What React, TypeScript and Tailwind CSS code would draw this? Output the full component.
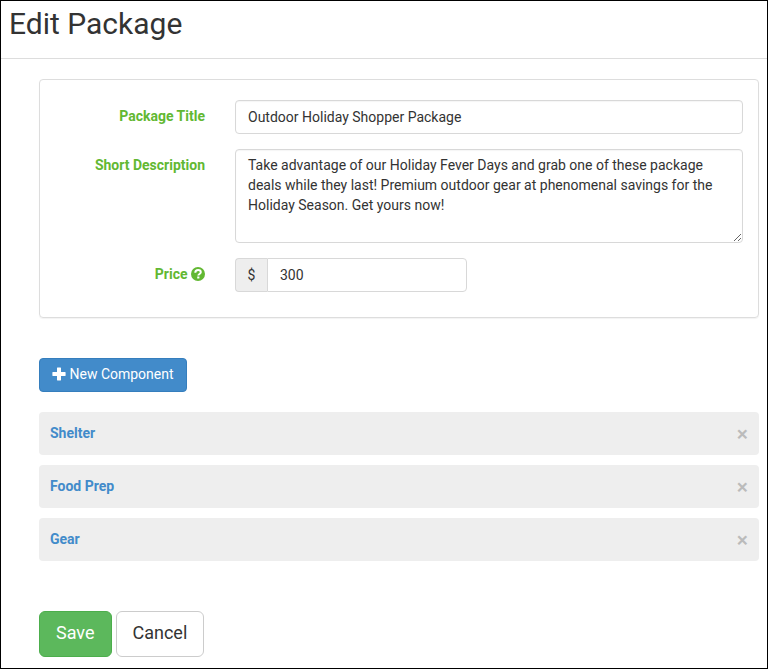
import React, { useState } from "react";

const initialComponents = [
  { id: 1, name: "Shelter" },
  { id: 2, name: "Food Prep" },
  { id: 3, name: "Gear" },
];

const inputClass =
  "block w-full h-[34px] rounded border border-[#d8d8d8] bg-white px-3 text-sm text-[#333] shadow-[inset_0_1px_1px_rgba(0,0,0,0.04)] outline-none focus:border-[#66afe9]";

const labelClass =
  "w-[165px] shrink-0 pt-[6px] text-right text-sm leading-5 font-bold text-[#62b832]";

function QuestionIcon() {
  return (
    <svg viewBox="0 0 14 14" className="inline-block size-[14px] align-[-2px]" aria-hidden="true">
      <circle cx="7" cy="7" r="7" fill="currentColor" />
      <path
        d="M4.3 5.8C4.3 4 5.5 3.1 7.1 3.1S9.8 4 9.8 5.3C9.8 7 7.3 7 7.3 8.6"
        fill="none"
        stroke="#fff"
        strokeWidth="2"
      />
      <path d="M6.2 9.5h2.2v2H6.2z" fill="#fff" />
    </svg>
  );
}

function PlusIcon() {
  return (
    <svg viewBox="0 0 14 14" className="inline-block size-[14px] align-[-2px]" aria-hidden="true">
      <path
        d="M5.4 0.5h3.2q.4 0 .4.4V5h4.2q.4 0 .4.4v3.2q0 .4-.4.4H9v4.1q0 .4-.4.4H5.4q-.4 0-.4-.4V9H.8q-.4 0-.4-.4V5.4Q.4 5 .8 5H5V.9q0-.4.4-.4z"
        fill="currentColor"
      />
    </svg>
  );
}

export default function App() {
  const [components, setComponents] = useState(initialComponents);
  const [nextId, setNextId] = useState(4);

  const handleAdd = () => {
    setComponents([...components, { id: nextId, name: "New Component" }]);
    setNextId(nextId + 1);
  };

  const handleRemove = (id: number) => {
    setComponents(components.filter((component) => component.id !== id));
  };

  return (
    <main className="min-h-screen border border-black bg-white font-[Roboto,sans-serif] text-sm leading-5 text-[#333]">
      <header className="border-b border-[#ddd] px-2 pt-1 pb-[15px]">
        <h1 className="text-[30px] leading-[38px] font-normal">Edit Package</h1>
      </header>

      <form className="pt-5 pr-2 pb-[11px] pl-[38px]" onSubmit={(e) => e.preventDefault()}>
        {/* Package details */}
        <section className="space-y-[15px] rounded border border-[#ddd] pt-5 pr-[15px] pb-[25px] shadow-[0_1px_1px_rgba(0,0,0,0.05)]">
          <div className="flex gap-[30px]">
            <label htmlFor="title" className={labelClass}>
              Package Title
            </label>
            <div className="flex-1">
              <input
                id="title"
                type="text"
                defaultValue="Outdoor Holiday Shopper Package"
                className={inputClass}
              />
            </div>
          </div>

          <div className="flex gap-[30px]">
            <label htmlFor="description" className={labelClass}>
              Short Description
            </label>
            <div className="flex-1">
              <textarea
                id="description"
                defaultValue="Take advantage of our Holiday Fever Days and grab one of these package deals while they last! Premium outdoor gear at phenomenal savings for the Holiday Season. Get yours now!"
                className="block h-[94px] w-full resize rounded border border-[#d8d8d8] bg-white px-3 py-[5px] text-sm leading-5 text-[#333] shadow-[inset_0_1px_1px_rgba(0,0,0,0.04)] outline-none focus:border-[#66afe9]"
              />
            </div>
          </div>

          <div className="flex gap-[30px]">
            <label htmlFor="price" className={labelClass}>
              Price <QuestionIcon />
            </label>
            <div className="flex w-[232px]">
              <span className="flex w-8 shrink-0 items-center justify-center rounded-l border border-r-0 border-[#d8d8d8] bg-[#eee]">
                $
              </span>
              <input
                id="price"
                type="text"
                defaultValue="300"
                className="block h-[34px] w-full min-w-0 rounded-r border border-[#d8d8d8] bg-white px-3 text-sm text-[#333] outline-none focus:border-[#66afe9]"
              />
            </div>
          </div>
        </section>

        <button
          type="button"
          onClick={handleAdd}
          className="mt-10 block h-[34px] rounded border border-[#357ebd] bg-[#428bca] px-3 pb-[2px] text-sm leading-5 text-white hover:bg-[#3276b1]"
        >
          <PlusIcon /> New Component
        </button>

        {/* Components list */}
        <ul className="mt-5 space-y-[10px]">
          {components.map((component) => (
            <li
              key={component.id}
              className="flex h-[43px] items-center justify-between rounded bg-[#eee] px-[11px]"
            >
              <a href="#" className="pb-[2px] font-bold text-[#428bca] hover:underline">
                {component.name}
              </a>
              <button
                type="button"
                aria-label={`Remove ${component.name}`}
                onClick={() => handleRemove(component.id)}
                className="text-[21px] leading-5 font-medium text-[#bbb] hover:text-[#777]"
              >
                ×
              </button>
            </li>
          ))}
        </ul>

        <div className="mt-[50px] flex gap-1">
          <button
            type="submit"
            className="h-[46px] rounded-md border border-[#4cae4c] bg-[#5cb85c] px-4 pb-[2px] text-lg text-white hover:bg-[#47a447]"
          >
            Save
          </button>
          <button
            type="button"
            className="h-[46px] rounded-md border border-[#ccc] bg-white px-4 pb-[2px] text-lg text-[#333] hover:bg-[#ebebeb]"
          >
            Cancel
          </button>
        </div>
      </form>
    </main>
  );
}
